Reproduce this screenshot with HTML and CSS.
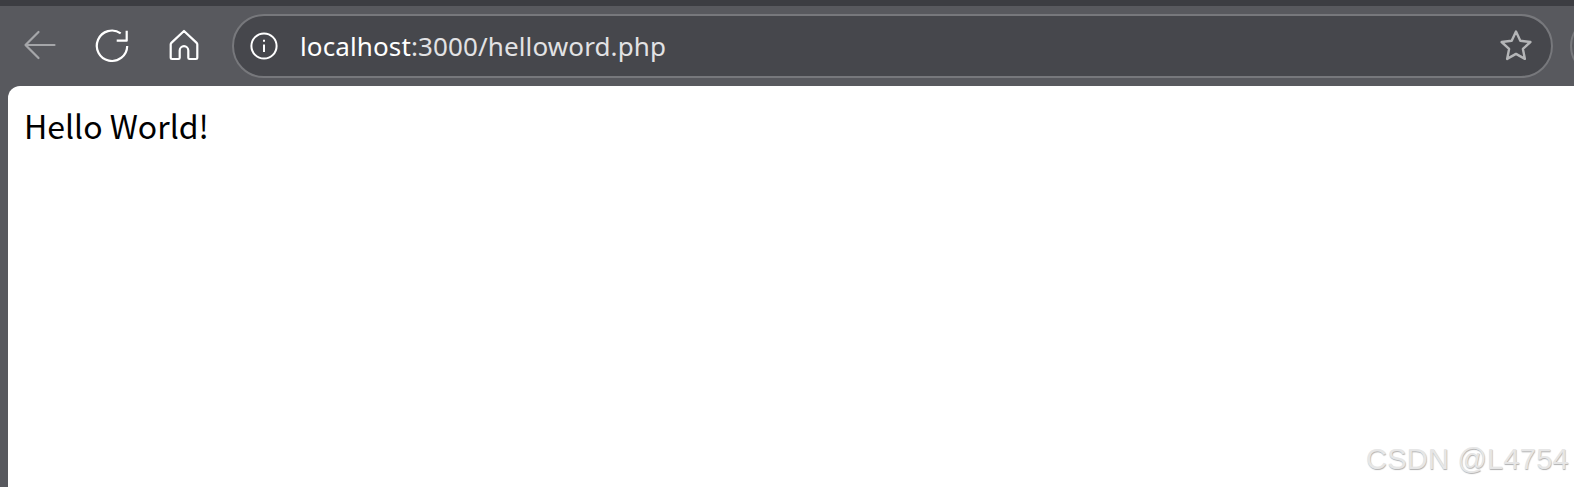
FILE: index.html
```html
<!DOCTYPE html>
<html lang="zh">
<head>
  <meta charset="UTF-8">
  <title>helloword.php</title>
  <link rel="stylesheet" href="styles.css">
</head>
<body>
  <div class="tabstrip"></div>
  <div class="toolbar">
    <svg class="icon icon-back" width="36" height="36" viewBox="0 0 36 36">
      <path d="M34.500 18H5.500M18.500 5 5.500 18l13 13"/>
    </svg>
    <svg class="icon icon-reload" width="36" height="36" viewBox="0 0 36 36">
      <path d="M26.700 5.300A15.200 15.200 0 1 0 33.200 18"/>
      <path d="M32.700 2.700v10h-10"/>
    </svg>
    <svg class="icon icon-home" width="32" height="32" viewBox="0 0 32 32">
      <path d="M16 2 3.600 13.600c-.6.600-.9 1.200-.9 2v13c0 .9.500 1.400 1.400 1.400h6.400c.8 0 1.200-.5 1.200-1.300v-7.200c0-2.400 2-4.300 4.300-4.300s4.300 1.900 4.300 4.300v7.200c0 .8.400 1.300 1.200 1.300h6.400c.9 0 1.400-.5 1.400-1.400v-13c0-.8-.3-1.400-.9-2z"/>
    </svg>
    <div class="omnibox">
      <svg class="icon-info" width="28" height="28" viewBox="0 0 28 28">
        <circle cx="14" cy="14" r="12.600"/>
        <path d="M14 12.500v7.500M14 7.800v2"/>
      </svg>
      <span class="url">localhost<span class="dim">:3000/helloword.php</span></span>
      <svg class="icon-star" width="34" height="34" viewBox="0 0 34 34">
        <path d="M17 2.500l4.300 9.300 10.100 1.200-7.500 6.900 2 10-8.900-5-8.900 5 2-10-7.500-6.900 10.100-1.200z"/>
      </svg>
    </div>
    <div class="profile"></div>
  </div>
  <div class="page">
    <p class="hello">Hello World!</p>
  </div>
  <div class="watermark">CSDN @L4754</div>
</body>
</html>
```

FILE: styles.css
```css
html, body {
  margin: 0;
  padding: 0;
  height: 487px;
  overflow: hidden;
}
body {
  position: relative;
  background-color: #58595e;
  font-family: "Noto Sans CJK SC", "Noto Sans", sans-serif;
}
.tabstrip {
  height: 6px;
  background-color: #3c3d42;
}
.toolbar {
  display: flex;
  align-items: center;
  height: 80px;
  box-sizing: border-box;
  padding-left: 20px;
  overflow: hidden;
}
.icon {
  flex: none;
  fill: none;
  stroke: #fff;
  stroke-width: 2.200;
  stroke-linejoin: round;
  overflow: visible;
}
.icon-back {
  margin-top: -3px;
  stroke: #a5a6a9;
  stroke-width: 2.200;
  stroke-linecap: round;
}
.icon-reload {
  margin-left: 38px;
  stroke-width: 2.200;
}
.icon-home {
  margin-left: 38px;
  margin-top: -2px;
}
.omnibox {
  flex: none;
  display: flex;
  align-items: center;
  box-sizing: border-box;
  width: 1321px;
  height: 64px;
  margin-left: 32px;
  padding: 0 18px 0 16px;
  background-color: #46474c;
  border: 2px solid #77787c;
  border-radius: 32px;
}
.icon-info {
  flex: none;
  margin-top: -1px;
  fill: none;
  stroke: #fff;
  stroke-width: 2;
}
.url {
  flex: 1;
  margin-left: 22px;
  margin-top: -1px;
  font-family: "Noto Sans", sans-serif;
  font-size: 26px;
  letter-spacing: 0.12px;
  color: #fff;
  white-space: nowrap;
}
.dim {
  color: #e2e2e4;
}
.icon-star {
  flex: none;
  fill: none;
  stroke: #b4b5b7;
  stroke-width: 2.400;
  stroke-linejoin: round;
}
.profile {
  flex: none;
  width: 60px;
  height: 60px;
  margin-left: 17px;
  box-sizing: border-box;
  border: 2px solid #77787c;
  border-radius: 50%;
}
.page {
  height: 401px;
  margin-left: 8px;
  padding: 17px 16px;
  box-sizing: border-box;
  background-color: #fff;
  border-top-left-radius: 12px;
}
.hello {
  margin: 0;
  font-size: 32px;
  line-height: 44px;
  color: #000;
}
.watermark {
  position: absolute;
  right: 5px;
  bottom: 10px;
  font-family: "Liberation Sans", sans-serif;
  font-size: 29px;
  line-height: 36px;
  letter-spacing: 0.25px;
  color: #e6e6e6;
  text-shadow: 0.5px 0.5px 1px #b0b0b0;
}
```
